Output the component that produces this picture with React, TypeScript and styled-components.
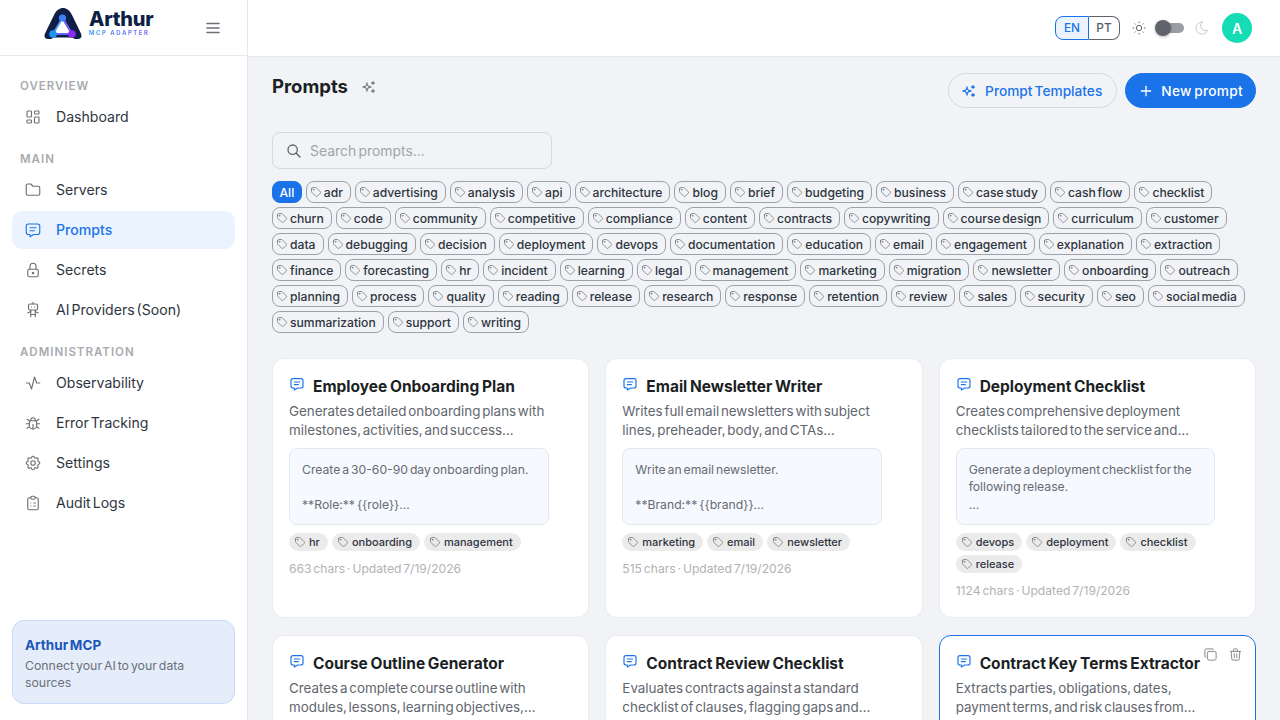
import React from 'react';
import styled, { createGlobalStyle } from 'styled-components';
import {
  TbLayoutDashboard, TbFolder, TbMessage, TbLock, TbRobot, TbActivity, TbBug, TbSettings,
  TbClipboardList, TbMenu2, TbSun, TbMoon, TbSparkles, TbPlus, TbSearch, TbTag, TbCopy, TbTrash,
} from 'react-icons/tb';

const GlobalStyle = createGlobalStyle`
  html, body { margin: 0; padding: 0; height: 100%; overflow: hidden; }
  * { box-sizing: border-box; }
  body {
    font-family: Inter, "Liberation Sans", sans-serif;
    word-spacing: -1.5px;
    color: #212529;
    background: #f1f3f6;
  }
`;

const Page = styled.div`
  display: flex;
  width: 1280px;
  height: 720px;
  overflow: hidden;
`;

const Sidebar = styled.aside`
  width: 248px;
  flex: none;
  display: flex;
  flex-direction: column;
  background: #fff;
  border-right: 1px solid #e6e8ec;
`;

const Brand = styled.div`
  height: 56px;
  flex: none;
  display: flex;
  align-items: center;
  padding: 0 25px 0 44px;
  border-bottom: 1px solid #e6e8ec;
`;

const LogoMark = styled.svg`
  margin-top: -8px;
  flex: none;
`;

const BrandText = styled.div`
  margin-left: 7px;
  margin-top: -9px;
  display: flex;
  flex-direction: column;
`;

const BrandName = styled.span`
  font-size: 20px;
  line-height: 19px;
  font-weight: 800;
  color: #0f1f46;
  letter-spacing: -0.2px;
`;

const BrandSub = styled.span`
  font-size: 6px;
  line-height: 7px;
  font-weight: 700;
  letter-spacing: 1.5px;
  word-spacing: 0;
  background: linear-gradient(90deg, #3b9bf5, #8a5cf6);
  -webkit-background-clip: text;
  background-clip: text;
  color: transparent;
`;

const MenuButton = styled.div`
  margin-left: auto;
  display: flex;
  color: #6b7078;
`;

const Nav = styled.nav`
  flex: 1;
  padding: 22px 12px 0;
`;

const SectionLabel = styled.div`
  padding-left: 8px;
  font-size: 11.5px;
  line-height: 16px;
  font-weight: 600;
  letter-spacing: 1px;
  color: #a9abaf;
  text-transform: uppercase;
  margin-bottom: 4px;
`;

const NavGroup = styled.div`
  display: flex;
  flex-direction: column;
  gap: 2px;
  margin-bottom: 15px;
`;

const NavItem = styled.div<{ $active?: boolean }>`
  height: 38px;
  display: flex;
  align-items: center;
  gap: 14px;
  padding: 0 0 1px 12px;
  border-radius: 10px;
  font-size: 14.1px;
  word-spacing: -2px;
  font-weight: ${p => (p.$active ? 500 : 400)};
  color: ${p => (p.$active ? '#1a73e8' : '#2f3540')};
  background: ${p => (p.$active ? '#ebf3fe' : 'transparent')};
  svg { color: ${p => (p.$active ? '#1a73e8' : '#6b7078')}; flex: none; }
`;

const InfoCard = styled.div`
  margin: 0 12px 16px;
  height: 84px;
  padding: 15px 12px 0;
  border-radius: 12px;
  background: #e5edfb;
  border: 1px solid #c9daf8;
`;

const InfoTitle = styled.div`
  font-size: 13.5px;
  line-height: 18px;
  font-weight: 700;
  color: #1a56b8;
`;

const InfoText = styled.div`
  margin-top: 4px;
  font-size: 12.3px;
  line-height: 16.5px;
  color: #6b7078;
`;

const Right = styled.div`
  flex: 1;
  min-width: 0;
  display: flex;
  flex-direction: column;
`;

const Topbar = styled.header`
  height: 57px;
  flex: none;
  display: flex;
  align-items: center;
  justify-content: flex-end;
  padding-right: 28px;
  background: #fff;
  border-bottom: 1px solid #e6e8ec;
`;

const LangGroup = styled.div`
  display: flex;
  height: 24px;
`;

const LangButton = styled.div<{ $active?: boolean }>`
  width: ${p => (p.$active ? 34 : 31)}px;
  display: flex;
  align-items: center;
  justify-content: center;
  font-size: 11.8px;
  font-weight: 500;
  color: ${p => (p.$active ? '#1a73e8' : '#555b65')};
  background: ${p => (p.$active ? '#ebf3fe' : '#fff')};
  border: 1px solid ${p => (p.$active ? '#1a73e8' : '#5f646d')};
  border-left-width: ${p => (p.$active ? 1 : 0)}px;
  border-radius: ${p => (p.$active ? '8px 0 0 8px' : '0 8px 8px 0')};
`;

const ThemeSwitch = styled.div`
  display: flex;
  align-items: center;
  margin-left: 11px;
  margin-right: 12px;
  color: #5f646d;
`;

const SwitchTrack = styled.div`
  position: relative;
  width: 21px;
  height: 10px;
  margin: 0 10px 0 16px;
  border-radius: 5px;
  background: #9a9da2;
`;

const SwitchKnob = styled.span`
  position: absolute;
  left: -8px;
  top: -3px;
  width: 16px;
  height: 16px;
  border-radius: 50%;
  background: #5f636b;
  box-shadow: 0 1px 3px rgba(0, 0, 0, 0.3);
`;

const MoonIcon = styled(TbMoon)`
  color: #c8cacd;
`;

const Avatar = styled.div`
  width: 30px;
  height: 30px;
  border-radius: 50%;
  display: flex;
  align-items: center;
  justify-content: center;
  background: #14dcb4;
  color: #fff;
  font-size: 14px;
  font-weight: 600;
`;

const Main = styled.main`
  flex: 1;
  min-height: 0;
  overflow: hidden;
  padding: 16px 24px 0;
`;

const TitleRow = styled.div`
  display: flex;
  align-items: flex-start;
  height: 35px;
`;

const PageTitle = styled.h1`
  margin: 0;
  font-size: 18.5px;
  line-height: 27px;
  font-weight: 700;
  color: #1c1f24;
`;

const TitleSpark = styled(TbSparkles)`
  margin: 6px 0 0 13px;
  color: #7a7e85;
`;

const Actions = styled.div`
  margin-left: auto;
  display: flex;
  gap: 8px;
`;

const PillButton = styled.div<{ $primary?: boolean }>`
  height: 35px;
  display: flex;
  align-items: center;
  gap: ${p => (p.$primary ? 7 : 8)}px;
  padding: 0 ${p => (p.$primary ? 12 : 14)}px 0 12px;
  border-radius: 18px;
  font-size: 13.7px;
  font-weight: 500;
  letter-spacing: ${p => (p.$primary ? 0.3 : 0)}px;
  color: ${p => (p.$primary ? '#fff' : '#1a73e8')};
  background: ${p => (p.$primary ? '#1a73e8' : 'transparent')};
  border: 1px solid ${p => (p.$primary ? '#1a73e8' : '#d6d9de')};
`;

const SearchBox = styled.div`
  margin-top: 24px;
  width: 280px;
  height: 37px;
  display: flex;
  align-items: center;
  gap: 8px;
  padding-left: 13px;
  border: 1px solid #d6d9de;
  border-radius: 8px;
  font-size: 13.9px;
  color: #a2a5aa;
  svg { color: #5f646d; }
`;

const ChipRows = styled.div`
  margin-top: 12px;
  display: flex;
  flex-direction: column;
  gap: 4px;
`;

const ChipRow = styled.div`
  display: flex;
  gap: 4px;
`;

const FilterChip = styled.div<{ $active?: boolean }>`
  height: 22px;
  display: flex;
  align-items: center;
  gap: 2px;
  padding: 0 ${p => (p.$active ? 6.5 : 7)}px 0 ${p => (p.$active ? 6.5 : 3)}px;
  border-radius: 8px;
  font-size: 12.15px;
  font-weight: 500;
  white-space: nowrap;
  color: ${p => (p.$active ? '#fff' : '#2f3540')};
  background: ${p => (p.$active ? '#1a73e8' : 'transparent')};
  border: 1px solid ${p => (p.$active ? '#1a73e8' : '#9da1a8')};
  svg { color: #6b7078; flex: none; }
`;

const CardGrid = styled.div`
  margin-top: 25px;
  display: grid;
  grid-template-columns: repeat(3, 1fr);
  gap: 17px 16px;
`;

const Card = styled.article<{ $hover?: boolean }>`
  position: relative;
  height: 260.3px;
  padding: 17px 16px 0;
  background: #fff;
  border: 1px solid ${p => (p.$hover ? '#1a73e8' : '#e9ebee')};
  border-radius: 12px;
`;

const CardHead = styled.div`
  display: flex;
  gap: 8px;
  align-items: flex-start;
`;

const CardIcon = styled(TbMessage)`
  color: #1a73e8;
  flex: none;
`;

const CardTitle = styled.h3`
  margin: 0;
  font-size: 15.5px;
  word-spacing: -1px;
  line-height: 21px;
  font-weight: 700;
  color: #1c1f24;
  white-space: nowrap;
`;

const CardDesc = styled.p`
  margin: 5px 0 0;
  font-size: 13.4px;
  word-spacing: -2px;
  line-height: 19px;
  color: #62666e;
  white-space: pre-line;
`;

const PromptBox = styled.div`
  margin-top: 8px;
  width: 259.5px;
  height: 77px;
  padding: 12px 12px 0;
  background: #f6f9fe;
  border: 1px solid #e3e8f0;
  border-radius: 8px;
  font-size: 12.2px;
  line-height: 17.3px;
  color: #666a72;
  white-space: pre-line;
`;

const TagRow = styled.div`
  margin-top: 8px;
  display: flex;
  flex-wrap: wrap;
  gap: 4px;
`;

const Tag = styled.span`
  height: 18px;
  display: flex;
  align-items: center;
  gap: 3px;
  padding: 0 8px 0 5px;
  border-radius: 9px;
  background: #ebebeb;
  font-size: 11px;
  font-weight: 500;
  color: #2f3540;
  svg { color: #6b7078; flex: none; }
`;

const CardMeta = styled.div`
  margin-top: 9px;
  font-size: 12.1px;
  line-height: 17px;
  color: #b0b2b6;
`;

const CardTools = styled.div`
  position: absolute;
  top: 11px;
  right: 12px;
  display: flex;
  gap: 10px;
  color: #808388;
`;

const Logo = () => (
  <LogoMark width="38" height="32" viewBox="0 0 38 32">
    <path d="M4 31 C0.5 31 -0.5 28 1.5 24.5 L10 7 C12.5 2 15.5 0 19 0 C22.5 0 25.5 2 28 7 L36.5 24.5 C38.5 28 37.5 31 34 31 L31 31 L28 29.5 L10 29.5 L7 31 Z" fill="#0f1f46" />
    <path d="M18.5 10 L9 26 L28 26 Z" fill="#fff" stroke="#4f9cf9" strokeWidth="1.8" strokeLinejoin="round" />
    <path d="M28 26 L18.5 10" stroke="#7a5cf6" strokeWidth="1.8" />
    <path d="M9 26 L28 26" stroke="#6a5cf6" strokeWidth="1.8" />
    <circle cx="18.5" cy="10" r="3.6" fill="#3b82f6" />
    <circle cx="9" cy="26" r="3.8" fill="#1f96f5" />
    <circle cx="28" cy="26" r="3.8" fill="#8a2cf5" />
  </LogoMark>
);

const nav = [
  { label: 'Overview', items: [{ name: 'Dashboard', Icon: TbLayoutDashboard }] },
  {
    label: 'Main',
    items: [
      { name: 'Servers', Icon: TbFolder },
      { name: 'Prompts', Icon: TbMessage, active: true },
      { name: 'Secrets', Icon: TbLock },
      { name: 'AI Providers (Soon)', Icon: TbRobot },
    ],
  },
  {
    label: 'Administration',
    items: [
      { name: 'Observability', Icon: TbActivity },
      { name: 'Error Tracking', Icon: TbBug },
      { name: 'Settings', Icon: TbSettings },
      { name: 'Audit Logs', Icon: TbClipboardList },
    ],
  },
];

const chipRows = [
  ['adr', 'advertising', 'analysis', 'api', 'architecture', 'blog', 'brief', 'budgeting', 'business', 'case study', 'cash flow', 'checklist'],
  ['churn', 'code', 'community', 'competitive', 'compliance', 'content', 'contracts', 'copywriting', 'course design', 'curriculum', 'customer'],
  ['data', 'debugging', 'decision', 'deployment', 'devops', 'documentation', 'education', 'email', 'engagement', 'explanation', 'extraction'],
  ['finance', 'forecasting', 'hr', 'incident', 'learning', 'legal', 'management', 'marketing', 'migration', 'newsletter', 'onboarding', 'outreach'],
  ['planning', 'process', 'quality', 'reading', 'release', 'research', 'response', 'retention', 'review', 'sales', 'security', 'seo', 'social media'],
  ['summarization', 'support', 'writing'],
];

const cards = [
  {
    title: 'Employee Onboarding Plan',
    desc: 'Generates detailed onboarding plans with\nmilestones, activities, and success…',
    prompt: 'Create a 30-60-90 day onboarding plan.\n\n**Role:** {{role}}…',
    tags: ['hr', 'onboarding', 'management'],
    meta: '663 chars · Updated 7/19/2026',
  },
  {
    title: 'Email Newsletter Writer',
    desc: 'Writes full email newsletters with subject\nlines, preheader, body, and CTAs…',
    prompt: 'Write an email newsletter.\n\n**Brand:** {{brand}}…',
    tags: ['marketing', 'email', 'newsletter'],
    meta: '515 chars · Updated 7/19/2026',
  },
  {
    title: 'Deployment Checklist',
    desc: 'Creates comprehensive deployment\nchecklists tailored to the service and…',
    prompt: 'Generate a deployment checklist for the\nfollowing release.\n…',
    tags: ['devops', 'deployment', 'checklist', 'release'],
    meta: '1124 chars · Updated 7/19/2026',
  },
  {
    title: 'Course Outline Generator',
    desc: 'Creates a complete course outline with\nmodules, lessons, learning objectives,…',
  },
  {
    title: 'Contract Review Checklist',
    desc: 'Evaluates contracts against a standard\nchecklist of clauses, flagging gaps and…',
  },
  {
    title: 'Contract Key Terms Extractor',
    desc: 'Extracts parties, obligations, dates,\npayment terms, and risk clauses from…',
    hover: true,
  },
];

export default function App() {
  return (
    <Page>
      <GlobalStyle />
      <Sidebar>
        <Brand>
          <Logo />
          <BrandText>
            <BrandName>Arthur</BrandName>
            <BrandSub>MCP ADAPTER</BrandSub>
          </BrandText>
          <MenuButton><TbMenu2 size={18} /></MenuButton>
        </Brand>
        <Nav>
          {nav.map(group => (
            <div key={group.label}>
              <SectionLabel>{group.label}</SectionLabel>
              <NavGroup>
                {group.items.map(({ name, Icon, active }: any) => (
                  <NavItem key={name} $active={active}>
                    <Icon size={18} strokeWidth={1.5} />
                    {name}
                  </NavItem>
                ))}
              </NavGroup>
            </div>
          ))}
        </Nav>
        <InfoCard>
          <InfoTitle>Arthur MCP</InfoTitle>
          <InfoText>Connect your AI to your data sources</InfoText>
        </InfoCard>
      </Sidebar>
      <Right>
        <Topbar>
          <LangGroup>
            <LangButton $active>EN</LangButton>
            <LangButton>PT</LangButton>
          </LangGroup>
          <ThemeSwitch>
            <TbSun size={16} strokeWidth={1.5} />
            <SwitchTrack><SwitchKnob /></SwitchTrack>
            <MoonIcon size={16} strokeWidth={1.5} />
          </ThemeSwitch>
          <Avatar>A</Avatar>
        </Topbar>
        <Main>
          <TitleRow>
            <PageTitle>Prompts</PageTitle>
            <TitleSpark size={16} />
            <Actions>
              <PillButton><TbSparkles size={16} />Prompt Templates</PillButton>
              <PillButton $primary><TbPlus size={16} />New prompt</PillButton>
            </Actions>
          </TitleRow>
          <SearchBox><TbSearch size={16} />Search prompts...</SearchBox>
          <ChipRows>
            {chipRows.map((row, i) => (
              <ChipRow key={i}>
                {i === 0 && <FilterChip $active>All</FilterChip>}
                {row.map(t => (
                  <FilterChip key={t}><TbTag size={12} strokeWidth={1.5} />{t}</FilterChip>
                ))}
              </ChipRow>
            ))}
          </ChipRows>
          <CardGrid>
            {cards.map(c => (
              <Card key={c.title} $hover={c.hover}>
                {c.hover && (
                  <CardTools>
                    <TbCopy size={15} strokeWidth={1.5} />
                    <TbTrash size={15} strokeWidth={1.5} />
                  </CardTools>
                )}
                <CardHead>
                  <CardIcon size={16} strokeWidth={1.75} />
                  <CardTitle>{c.title}</CardTitle>
                </CardHead>
                <CardDesc>{c.desc}</CardDesc>
                {c.prompt && <PromptBox>{c.prompt}</PromptBox>}
                {c.tags && (
                  <TagRow>
                    {c.tags.map(t => (
                      <Tag key={t}><TbTag size={12} strokeWidth={1.5} />{t}</Tag>
                    ))}
                  </TagRow>
                )}
                {c.meta && <CardMeta>{c.meta}</CardMeta>}
              </Card>
            ))}
          </CardGrid>
        </Main>
      </Right>
    </Page>
  );
}
